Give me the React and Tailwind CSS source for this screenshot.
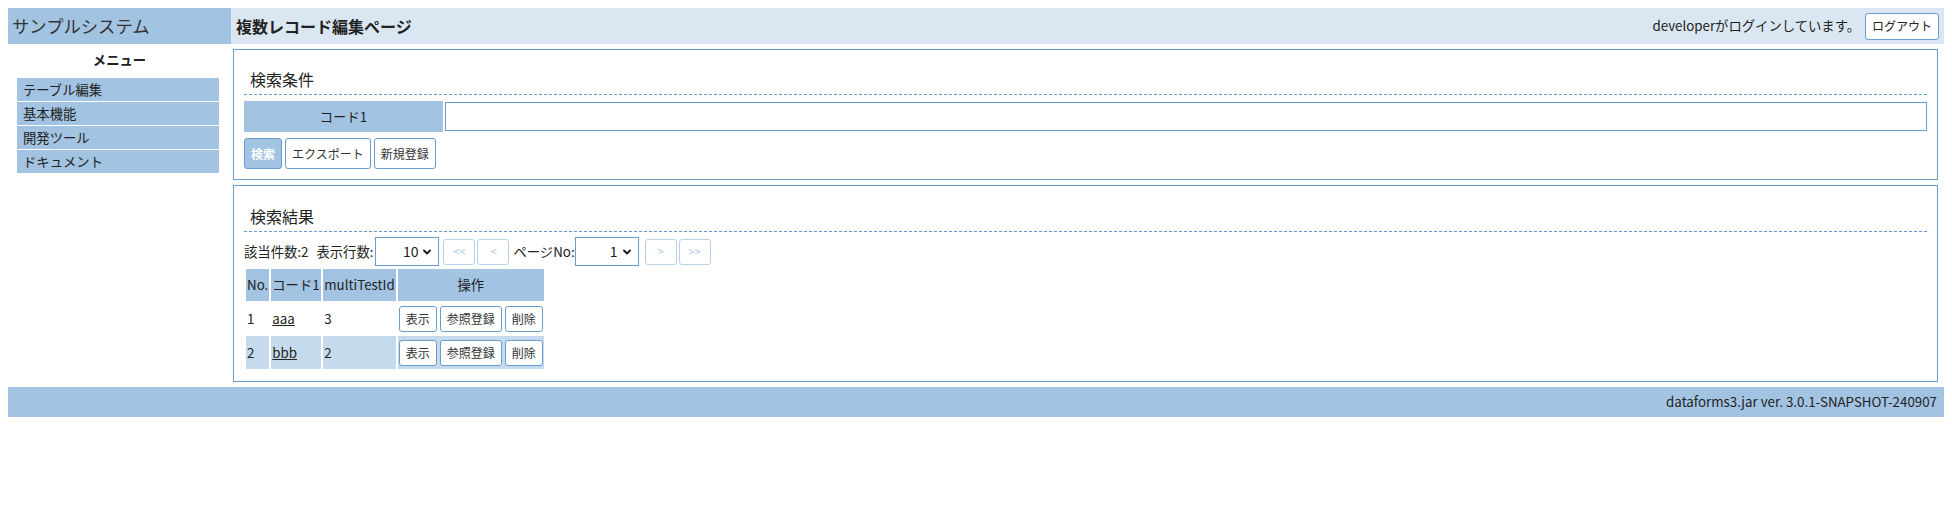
import { ChevronDown } from 'lucide-react';

const MENU_ITEMS = ['テーブル編集', '基本機能', '開発ツール', 'ドキュメント'];

const ROWS = [
  { no: 1, code: 'aaa', multiTestId: 3 },
  { no: 2, code: 'bbb', multiTestId: 2 },
];

function Button({ children, disabled, className = '' }) {
  if (disabled) {
    return (
      <button className={`rounded-[3px] border border-[#6a9ccf] bg-[#a2c4e2] px-[6px] text-[12px] font-bold text-white ${className}`}>
        {children}
      </button>
    );
  }

  return (
    <button className={`rounded-[3px] border border-[#6a9ccf] bg-white px-[6px] text-[12px] text-[#333] ${className}`}>
      {children}
    </button>
  );
}

function PageButton({ children }) {
  return (
    <button className="h-[26px] w-[32px] rounded-[3px] border border-[#b6d1ea] bg-white text-[11px] text-[#aac8e6]">
      {children}
    </button>
  );
}

function Select({ value }) {
  return (
    <div className="flex h-[29px] w-[64px] items-center justify-end gap-[3px] border border-[#6a9ccf] bg-white pr-[5px] text-[14px]">
      <span>{value}</span>
      <ChevronDown size={12} strokeWidth={4} />
    </div>
  );
}

function Panel({ title, children, topPad }) {
  return (
    <section className={`border border-[#6a9ccf] px-[10px] ${topPad}`}>
      <h3 className="h-[28px] border-b border-dashed border-[#6a9ccf] pl-[6px] text-[16px] leading-[24px]">
        {title}
      </h3>
      {children}
    </section>
  );
}

function App() {
  return (
    <div className="p-2 font-['Noto_Sans_CJK_JP','Noto_Sans',sans-serif] text-[13.33px] text-[#222]">
      <header className="flex h-[36px]">
        <div className="flex w-[223px] items-center bg-[#a2c4e2] pl-[4px] text-[17.33px] text-[#333]">
          サンプルシステム
        </div>
        <div className="flex flex-1 items-center justify-between bg-[#dae7f3] pl-[5px] pr-[5px]">
          <h1 className="text-[16px] font-bold">複数レコード編集ページ</h1>
          <div className="flex items-center gap-[5px]">
            <span>developerがログインしています。</span>
            <button className="h-[27px] rounded-[3px] border border-[#6a9ccf] bg-white px-[6px] text-[12px]">
              ログアウト
            </button>
          </div>
        </div>
      </header>

      <div className="flex">
        <aside className="w-[223px]">
          <p className="mt-[6px] h-[20px] text-center font-bold leading-[20px]">メニュー</p>
          <ul className="ml-[9px] mt-[8px] flex w-[202px] flex-col gap-[1px]">
            {MENU_ITEMS.map((item) => (
              <li key={item} className="h-[23px] bg-[#a2c4e2] pl-[6px] leading-[23px]">
                {item}
              </li>
            ))}
          </ul>
        </aside>

        <main className="ml-[2px] mr-[6px] flex flex-1 flex-col gap-[5px] pt-[5px]">
          <Panel title="検索条件" topPad="pt-[17px] pb-[10px]">
            <div className="mt-[6px] flex h-[31px] gap-[2px]">
              <div className="flex w-[199px] items-center justify-center bg-[#a2c4e2]">コード1</div>
              <div className="flex-1 py-[1px]">
                <input className="h-full w-full border border-[#6a9ccf] bg-white px-1 outline-none" />
              </div>
            </div>
            <div className="mt-[6px] flex h-[31px] gap-[3px]">
              <Button disabled>検索</Button>
              <Button>エクスポート</Button>
              <Button>新規登録</Button>
            </div>
          </Panel>

          <Panel title="検索結果" topPad="pt-[18px] pb-[10px]">
            <div className="mt-[5px] flex h-[29px] items-center">
              <span>該当件数:2</span>
              <span className="ml-[8px] mr-[2px]">表示行数:</span>
              <Select value="10" />
              <div className="ml-[4px] flex gap-[2px]">
                <PageButton>&lt;&lt;</PageButton>
                <PageButton>&lt;</PageButton>
              </div>
              <span className="ml-[4px]">ページNo:</span>
              <Select value="1" />
              <div className="ml-[6px] flex gap-[2px]">
                <PageButton>&gt;</PageButton>
                <PageButton>&gt;&gt;</PageButton>
              </div>
            </div>

            <table className="mt-[1px] border-separate border-spacing-[2px] text-left">
              <thead>
                <tr className="h-[32px] bg-[#a2c4e2]">
                  <th className="w-[23px] px-[1px] font-normal">No.</th>
                  <th className="w-[50px] px-[1px] font-normal">コード1</th>
                  <th className="w-[72px] px-[1px] font-normal">multiTestId</th>
                  <th className="w-[146px] px-[1px] text-center font-normal">操作</th>
                </tr>
              </thead>
              <tbody>
                {ROWS.map((row) => (
                  <tr key={row.no} className={row.no % 2 === 0 ? 'h-[33px] bg-[#c5daed]' : 'h-[31px]'}>
                    <td className="px-[1px]">{row.no}</td>
                    <td className="px-[1px]">
                      <a className="underline">{row.code}</a>
                    </td>
                    <td className="px-[1px]">{row.multiTestId}</td>
                    <td className="px-[1px]">
                      <div className="flex gap-[3px]">
                        <Button className={`h-[26px] ${row.no % 2 === 0 ? 'bg-[#c5daed]' : ''}`}>表示</Button>
                        <Button className={`h-[26px] ${row.no % 2 === 0 ? 'bg-[#c5daed]' : ''}`}>参照登録</Button>
                        <Button className={`h-[26px] ${row.no % 2 === 0 ? 'bg-[#c5daed]' : ''}`}>削除</Button>
                      </div>
                    </td>
                  </tr>
                ))}
              </tbody>
            </table>
          </Panel>
        </main>
      </div>

      <footer className="mt-[5px] flex h-[30px] items-center justify-end bg-[#a2c4e2] pr-[7px]">
        dataforms3.jar ver. 3.0.1-SNAPSHOT-240907
      </footer>
    </div>
  );
}

export default App;
